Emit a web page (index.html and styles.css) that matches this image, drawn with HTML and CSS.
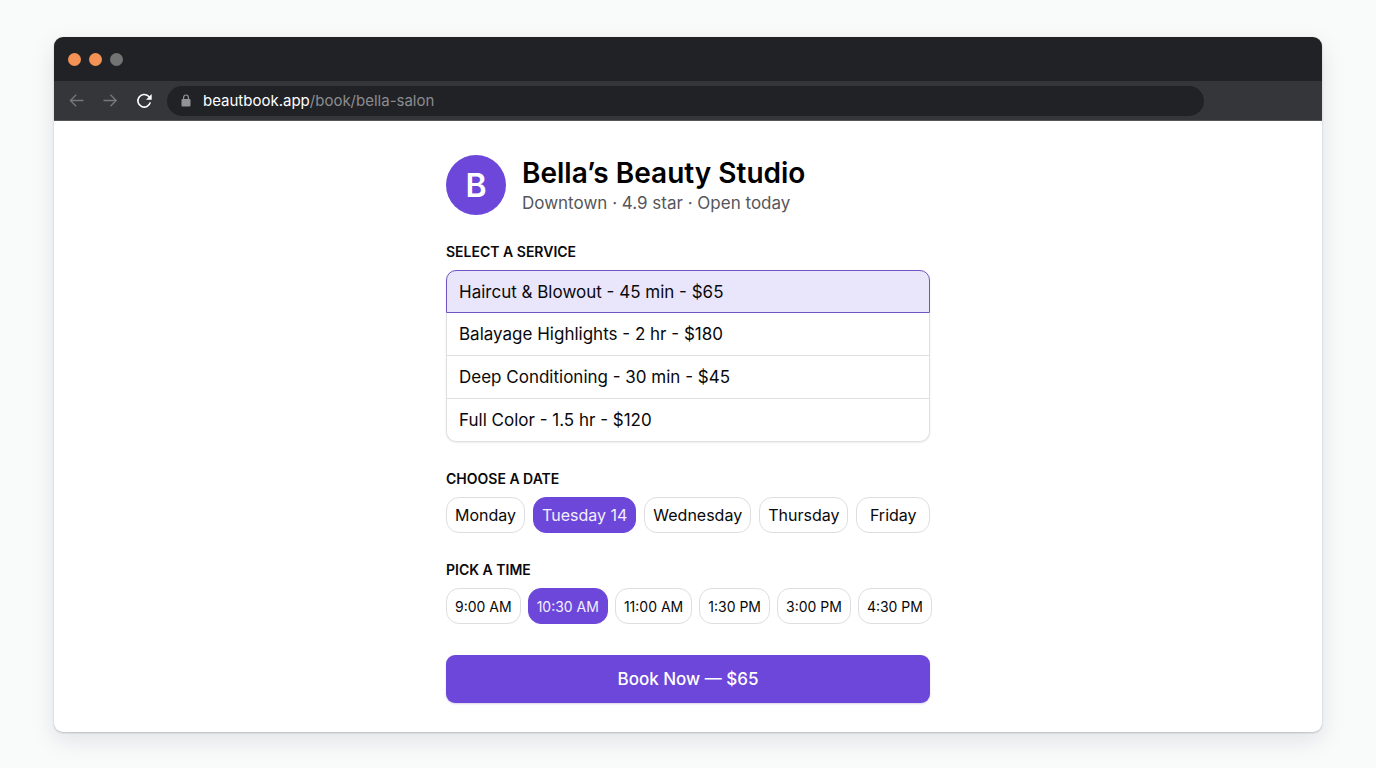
FILE: index.html
```html
<!DOCTYPE html>
<html lang="en">
<head>
    <meta charset="UTF-8">
    <meta name="viewport" content="width=device-width, initial-scale=1.0">
    <title>Bella’s Beauty Studio</title>
    <link rel="stylesheet" href="styles.css">
</head>
<body>
    <div class="browser">
        <div class="title-bar">
            <span class="dot"></span>
            <span class="dot"></span>
            <span class="dot dot-off"></span>
        </div>

        <div class="toolbar">
            <button class="nav-button" type="button" aria-label="Back">
                <svg width="16" height="16" viewBox="0 0 16 16"><path d="M15.5 7.5H2.6M8.2 1.7 2.4 7.5l5.8 5.8"/></svg>
            </button>
            <button class="nav-button" type="button" aria-label="Forward">
                <svg width="16" height="16" viewBox="0 0 16 16"><path d="M1.5 7.5h12.7M8.4 1.7l5.8 5.8-5.8 5.8"/></svg>
            </button>
            <button class="nav-button nav-reload" type="button" aria-label="Reload">
                <svg width="16" height="16" viewBox="0 0 16 16">
                    <path d="M14.3 9.4A6.3 6.3 0 1 1 12.6 3.3L14 4.8"/>
                    <path class="fill" d="M15.7 1v5.7H10z"/>
                </svg>
            </button>
            <div class="address">
                <svg class="lock" width="10" height="13" viewBox="0 0 10 13">
                    <path d="M2.6 6V3.4a2.4 2.4 0 0 1 4.8 0V6"/>
                    <rect x="0.5" y="5" width="9" height="7.5" rx="1"/>
                </svg>
                <div class="url" role="textbox" aria-label="Address" contenteditable="true" spellcheck="false">beautbook.app<span class="path">/book/bella-salon</span></div>
            </div>
        </div>

        <main class="page">
            <div class="booking">
                <header class="studio">
                    <div class="avatar">B</div>
                    <div>
                        <h1>Bella’s Beauty Studio</h1>
                        <p>Downtown · 4.9 star · Open today</p>
                    </div>
                </header>

                <section>
                    <h2 id="service-label">Select a service</h2>
                    <div class="services" role="group" aria-labelledby="service-label">
                        <button class="service" type="button" aria-pressed="true">Haircut &amp; Blowout - 45 min - $65</button>
                        <button class="service" type="button" aria-pressed="false">Balayage Highlights - 2 hr - $180</button>
                        <button class="service" type="button" aria-pressed="false">Deep Conditioning - 30 min - $45</button>
                        <button class="service" type="button" aria-pressed="false">Full Color - 1.5 hr - $120</button>
                    </div>
                </section>

                <section>
                    <h2 id="date-label">Choose a date</h2>
                    <div class="chips dates" role="group" aria-labelledby="date-label">
                        <button class="chip" type="button" aria-pressed="false">Monday</button>
                        <button class="chip" type="button" aria-pressed="true">Tuesday 14</button>
                        <button class="chip" type="button" aria-pressed="false">Wednesday</button>
                        <button class="chip" type="button" aria-pressed="false">Thursday</button>
                        <button class="chip" type="button" aria-pressed="false">Friday</button>
                    </div>
                </section>

                <section>
                    <h2 id="time-label">Pick a time</h2>
                    <div class="chips times" role="group" aria-labelledby="time-label">
                        <button class="chip" type="button" aria-pressed="false">9:00 AM</button>
                        <button class="chip" type="button" aria-pressed="true">10:30 AM</button>
                        <button class="chip" type="button" aria-pressed="false">11:00 AM</button>
                        <button class="chip" type="button" aria-pressed="false">1:30 PM</button>
                        <button class="chip" type="button" aria-pressed="false">3:00 PM</button>
                        <button class="chip" type="button" aria-pressed="false">4:30 PM</button>
                    </div>
                </section>

                <button class="book-button" type="button">Book Now — $65</button>
            </div>
        </main>
    </div>

    <script>
        // One choice per group
        document.querySelectorAll('[role="group"]').forEach(group => {
            group.addEventListener('click', e => {
                const picked = e.target.closest('button');
                if (!picked) return;
                group.querySelectorAll('button').forEach(b => b.setAttribute('aria-pressed', b === picked));
                if (group.classList.contains('services')) {
                    document.querySelector('.book-button').textContent = 'Book Now — ' + picked.textContent.split(' - ').pop();
                }
            });
        });
    </script>
</body>
</html>
```
FILE: styles.css
```css
* {
    box-sizing: border-box;
}

body {
    margin: 0;
    padding: 37px 54px;
    background-color: #f9fafa;
    color: #09090b;
    font-family: Inter, "Liberation Sans", sans-serif;
}

button {
    margin: 0;
    font-family: inherit;
    color: inherit;
    cursor: pointer;
}

/* Browser window */
.browser {
    background: #fff;
    border-radius: 9px;
    overflow: hidden;
    box-shadow: 0 1px 2px rgba(0, 0, 0, 0.2), 0 8px 24px rgba(20, 20, 40, 0.1);
}

.title-bar {
    display: flex;
    align-items: center;
    gap: 8px;
    height: 44px;
    padding: 0 14px;
    background: #212226;
}

.dot {
    width: 13px;
    height: 13px;
    border-radius: 50%;
    background: #f39254;
}

.dot-off {
    background: #717473;
}

.toolbar {
    display: flex;
    align-items: center;
    gap: 18px;
    height: 40px;
    padding: 0 118px 0 14px;
    background: #35363a;
    border-bottom: 1px solid #55565a;
}

.nav-button {
    display: flex;
    padding: 0;
    border: none;
    background: none;
}

.nav-button svg {
    fill: none;
    stroke: #77787b;
    stroke-width: 1.3;
}

.nav-reload svg {
    stroke: #fff;
    stroke-width: 1.6;
}

.nav-reload .fill {
    fill: #fff;
    stroke: none;
}

.address {
    display: flex;
    flex: 1;
    align-items: center;
    gap: 12px;
    height: 30px;
    padding: 0 14px;
    margin-left: -3px;
    border-radius: 15px;
    background: #212226;
}

.lock {
    fill: #929396;
}

.lock path {
    fill: none;
    stroke: #929396;
    stroke-width: 1.2;
}

.url {
    color: #fff;
    font-size: 15px;
    line-height: 20px;
    outline: none;
}

.url .path {
    color: #8b8c90;
}

/* Booking page */
.page {
    padding: 34px 20px 29px;
}

.booking {
    max-width: 484px;
    margin: 0 auto;
}

.studio {
    display: flex;
    align-items: center;
    gap: 16px;
}

.avatar {
    display: flex;
    align-items: center;
    justify-content: center;
    width: 60px;
    height: 60px;
    border-radius: 50%;
    background: #6c47d9;
    color: #fff;
    font-size: 32px;
    font-weight: 600;
}

.studio h1 {
    margin: 0;
    color: #000;
    font-size: 28px;
    font-weight: 600;
    line-height: 36px;
}

.studio p {
    margin: 0;
    color: #56565b;
    font-size: 17px;
    line-height: 24px;
}

h2 {
    margin: 26px 0 8px;
    font-size: 14px;
    font-weight: 600;
    line-height: 21px;
    text-transform: uppercase;
}

.services {
    border-radius: 10px;
    box-shadow: 0 1px 2px rgba(0, 0, 0, 0.08);
}

.service {
    display: block;
    width: 100%;
    height: 43px;
    padding: 0 12px;
    border: 1px solid #e0e0e3;
    border-top: none;
    background: #fff;
    font-size: 17px;
    text-align: left;
}

.service:first-child {
    border-top: 1px solid #e0e0e3;
    border-radius: 10px 10px 0 0;
}

.service:last-child {
    border-radius: 0 0 10px 10px;
}

.service[aria-pressed="true"] {
    border-color: #6f55c4;
    background: #e9e5fb;
}

.chips {
    display: flex;
    gap: 8px;
}

.chip {
    flex: none;
    height: 36px;
    border: 1px solid #dedee2;
    border-radius: 13px;
    background: #fff;
    white-space: nowrap;
}

.chip[aria-pressed="true"] {
    border-color: #6c47d9;
    background: #6c47d9;
    color: #f3effe;
}

.dates .chip {
    padding: 0 8px;
    font-size: 16px;
}

.dates .chip:last-child {
    flex: 1;
}

.times {
    gap: 7px;
}

.times .chip {
    padding: 0 8px;
    font-size: 14px;
}

.book-button {
    display: block;
    width: 100%;
    height: 48px;
    margin-top: 31px;
    border: none;
    border-radius: 9px;
    background: #6c47d9;
    color: #fff;
    font-size: 17px;
    font-weight: 500;
    box-shadow: 0 1px 2px rgba(60, 30, 150, 0.2);
}
```
